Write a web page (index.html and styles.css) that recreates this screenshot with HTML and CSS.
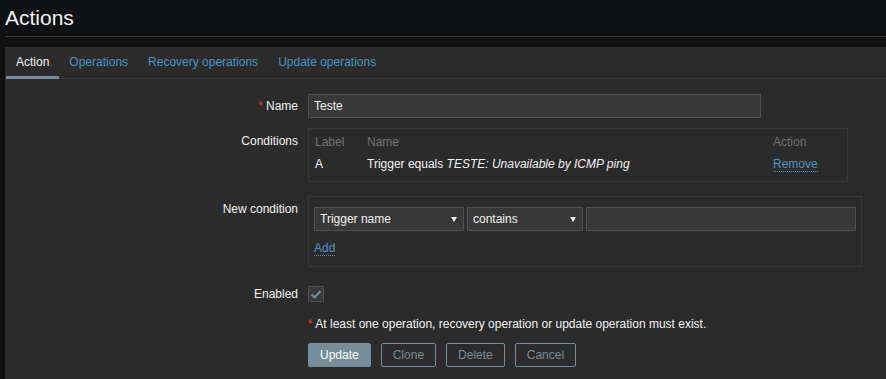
FILE: index.html
```html
<!DOCTYPE html>
<html lang="en">

<head>
    <meta charset="UTF-8">
    <meta name="viewport" content="width=device-width, initial-scale=1.0">
    <title>Actions</title>
    <link rel="stylesheet" href="styles.css">
</head>

<body>
    <div class="page">
        <header class="page-header">
            <h1>Actions</h1>
        </header>

        <div class="panel">
            <ul class="tabs">
                <li class="tab active"><a href="#">Action</a></li>
                <li class="tab"><a href="#">Operations</a></li>
                <li class="tab"><a href="#">Recovery operations</a></li>
                <li class="tab"><a href="#">Update operations</a></li>
            </ul>

            <form class="form">
                <div class="form-row row-name">
                    <label class="form-label"><span class="asterisk">*</span> Name</label>
                    <div class="form-field">
                        <input class="text-input name-input" type="text" value="Teste">
                    </div>
                </div>

                <div class="form-row row-conditions">
                    <label class="form-label box-label">Conditions</label>
                    <div class="form-field">
                        <div class="box conditions-box">
                            <table class="conditions">
                                <thead>
                                    <tr>
                                        <th class="col-label">Label</th>
                                        <th>Name</th>
                                        <th class="col-action">Action</th>
                                    </tr>
                                </thead>
                                <tbody>
                                    <tr>
                                        <td>A</td>
                                        <td>Trigger equals <em>TESTE: Unavailable by ICMP ping</em></td>
                                        <td><a class="link" href="#">Remove</a></td>
                                    </tr>
                                </tbody>
                            </table>
                        </div>
                    </div>
                </div>

                <div class="form-row row-new">
                    <label class="form-label box-label">New condition</label>
                    <div class="form-field">
                        <div class="box new-box">
                            <div class="controls">
                                <div class="select select-type">
                                    <span>Trigger name</span>
                                    <svg width="6" height="5" viewBox="0 0 6 5"><polygon points="0,0 6,0 3,5" fill="#f2f2f2"/></svg>
                                </div>
                                <div class="select select-op">
                                    <span>contains</span>
                                    <svg width="6" height="5" viewBox="0 0 6 5"><polygon points="0,0 6,0 3,5" fill="#f2f2f2"/></svg>
                                </div>
                                <input class="text-input value-input" type="text">
                            </div>
                            <a class="link add-link" href="#">Add</a>
                        </div>
                    </div>
                </div>

                <div class="form-row row-enabled">
                    <label class="form-label">Enabled</label>
                    <div class="form-field">
                        <span class="checkbox">
                            <svg width="14" height="14" viewBox="0 0 14 14"><polyline points="2.5,7.5 5.5,10.5 11.5,4" fill="none" stroke="#768d99" stroke-width="2"/></svg>
                        </span>
                    </div>
                </div>

                <div class="form-row row-message">
                    <div class="form-label"></div>
                    <div class="form-field">
                        <span class="asterisk">*</span> At least one operation, recovery operation or update operation must exist.
                    </div>
                </div>

                <div class="form-row row-buttons">
                    <div class="form-label"></div>
                    <div class="form-field buttons">
                        <button type="button" class="btn btn-main">Update</button>
                        <button type="button" class="btn btn-alt">Clone</button>
                        <button type="button" class="btn btn-alt">Delete</button>
                        <button type="button" class="btn btn-alt">Cancel</button>
                    </div>
                </div>
            </form>
        </div>
    </div>
</body>

</html>
```

FILE: styles.css
```css
body {
    margin: 0;
    background-color: #0e1012;
    color: #f2f2f2;
    font-family: "Liberation Sans", Arial, sans-serif;
    font-size: 12px;
    line-height: 14px;
    height: 379px;
    overflow: hidden;
}

.page {
    padding-left: 5px;
}

.page-header {
    padding: 6px 0;
    border-bottom: 1px solid #383838;
}

.page-header h1 {
    margin: 0;
    font-size: 21px;
    font-weight: normal;
    line-height: 24px;
}

.panel {
    margin-top: 10px;
    background: #2b2b2b;
    height: 332px;
}

/* tabs */
.tabs {
    display: flex;
    margin: 0;
    padding: 0 0 0 1px;
    list-style: none;
    height: 31px;
    border-bottom: 1px solid #383838;
}

.tab {
    height: 32px;
    line-height: 31px;
    padding: 0 10px;
}

.tab a {
    color: #4796c4;
    text-decoration: none;
}

.tab.active {
    box-shadow: inset 0 -3px 0 #768d99;
}

.tab.active a {
    color: #f2f2f2;
}

/* form layout */
.form {
    padding-top: 15px;
}

.form-row {
    display: flex;
}

.form-label {
    width: 293px;
    flex-shrink: 0;
    text-align: right;
    padding-top: 5px;
    box-sizing: border-box;
}

.form-label.box-label {
    padding-top: 6px;
}

.form-field {
    margin-left: 10px;
}

.asterisk {
    color: #e33734;
}

.row-name {
    margin-bottom: 10px;
}

.row-conditions {
    margin-bottom: 14px;
}

.row-new {
    margin-bottom: 14px;
}

.row-enabled {
    height: 24px;
    margin-bottom: 12px;
}

.row-enabled .form-label {
    padding-top: 6px;
}

.row-message {
    margin-bottom: 12px;
}

.row-message .form-label {
    padding-top: 0;
}

/* inputs */
.text-input {
    box-sizing: border-box;
    height: 24px;
    margin: 0;
    padding: 0 5px;
    background: #383838;
    border: 1px solid #4f4f4f;
    color: #f2f2f2;
    font-family: inherit;
    font-size: 12px;
    outline: none;
}

.name-input {
    width: 453px;
}

.box {
    border: 1px solid #383838;
    box-sizing: border-box;
}

.conditions-box {
    width: 540px;
    padding: 6px 6px 10px;
}

.conditions {
    width: 100%;
    border-collapse: collapse;
}

.conditions th {
    color: #737373;
    font-weight: normal;
    text-align: left;
    padding: 0 0 8px;
}

.conditions td {
    padding: 0;
}

.col-label {
    width: 52px;
}

.col-action {
    width: 68px;
}

.link {
    color: #4796c4;
    text-decoration: none;
    border-bottom: 1px dotted #4796c4;
}

/* new condition */
.new-box {
    width: 554px;
    padding: 10px 5px;
}

.controls {
    display: flex;
    gap: 3px;
}

.select {
    box-sizing: border-box;
    height: 24px;
    display: flex;
    align-items: center;
    justify-content: space-between;
    padding: 0 6px 0 5px;
    background: #383838;
    border: 1px solid #4f4f4f;
}

.select-type {
    width: 150px;
}

.select-op {
    width: 116px;
}

.value-input {
    width: 270px;
}

.add-link {
    display: inline-block;
    margin-top: 10px;
    line-height: 14px;
}

/* checkbox */
.checkbox {
    display: flex;
    align-items: center;
    justify-content: center;
    box-sizing: border-box;
    width: 16px;
    height: 16px;
    margin-top: 5px;
    background: #383838;
    border: 1px solid #4f4f4f;
}

/* buttons */
.buttons {
    display: flex;
    gap: 10px;
}

.btn {
    height: 24px;
    padding: 0 11px;
    border: 1px solid #768d99;
    border-radius: 2px;
    font-family: inherit;
    font-size: 12px;
    cursor: pointer;
}

.btn-main {
    background: #768d99;
    color: #ffffff;
}

.btn-alt {
    background: transparent;
    color: #768d99;
}
```
